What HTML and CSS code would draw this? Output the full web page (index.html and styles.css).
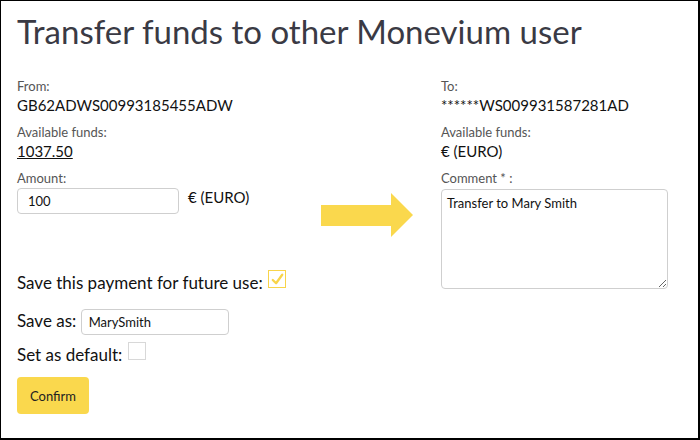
FILE: index.html
```html
<!DOCTYPE html>
<html>
<head>
<meta charset="utf-8">
<link rel="stylesheet" href="styles.css">
</head>
<body>
<div class="page">
  <h1 class="title">Transfer funds to other Monevium user</h1>
  <div class="cols">
    <div class="col-left">
      <div class="label">From:</div>
      <div class="value">GB62ADWS00993185455ADW</div>
      <div class="label">Available funds:</div>
      <div class="value"><span class="link">1037.50</span></div>
      <div class="label">Amount:</div>
      <div class="amount-row">
        <div class="input amount-input">100</div>
        <span class="currency">€ (EURO)</span>
      </div>
      <div class="opt-row save-row">Save this payment for future use: <span class="check checked"><svg viewBox="0 0 18 18" width="17" height="17"><polyline points="4,9.5 7.5,13 14,4" fill="none" stroke="#f8d44a" stroke-width="2.4" stroke-linecap="round" stroke-linejoin="round"/></svg></span></div>
      <div class="opt-row saveas-row">Save as: <span class="input saveas-input">MarySmith</span></div>
      <div class="opt-row default-row">Set as default: <span class="check"></span></div>
      <button class="btn">Confirm</button>
    </div>
    <div class="col-mid">
      <svg class="arrow" width="92" height="44" viewBox="0 0 92 44"><polygon points="0,12 70,12 70,0 92,22 70,44 70,33 0,33" fill="#fad84d"/></svg>
    </div>
    <div class="col-right">
      <div class="label">To:</div>
      <div class="value">******WS009931587281AD</div>
      <div class="label">Available funds:</div>
      <div class="value">€ (EURO)</div>
      <div class="label">Comment * :</div>
      <textarea class="comment">Transfer to Mary Smith</textarea>
    </div>
  </div>
</div>
</body>
</html>
```
FILE: styles.css
```css
html, body {
  margin: 0;
  padding: 0;
  background: #fff;
}
.page {
  width: 700px;
  height: 440px;
  box-sizing: border-box;
  border-style: solid;
  border-color: #000;
  border-width: 1px 2px 2px 1px;
  padding: 10px 0 0 16px;
  font-family: Lato, "Open Sans", sans-serif;
  color: #111;
}
.title {
  margin: 0;
  font-size: 33px;
  font-weight: 400;
  line-height: 40px;
  color: #3a3a44;
}
.cols {
  display: grid;
  grid-template-columns: 304px 120px 227px;
  margin-top: 26px;
}
.label {
  font-size: 13px;
  line-height: 18px;
  color: #555;
}
.value {
  font-size: 15px;
  line-height: 20px;
  color: #111;
  margin-bottom: 8px;
}
.link {
  text-decoration: underline;
}
.amount-row {
  display: flex;
  align-items: flex-start;
  margin-top: 1px;
}
.input {
  box-sizing: border-box;
  border: 1px solid #cfcfcf;
  border-radius: 4px;
  font-size: 13px;
  color: #111;
  display: inline-flex;
  align-items: center;
  background: #fff;
}
.amount-input {
  width: 162px;
  height: 26px;
  padding-left: 10px;
}
.currency {
  font-size: 15px;
  margin-left: 9px;
  line-height: 18px;
}
.opt-row {
  font-size: 17px;
  color: #111;
  line-height: 20px;
}
.save-row {
  margin-top: 57px;
}
.check {
  display: inline-block;
  box-sizing: border-box;
  width: 18px;
  height: 18px;
  border: 1px solid #d8d8d8;
  vertical-align: baseline;
  margin-left: 1px;
  position: relative;
  top: -1px;
}
.check.checked {
  border-color: #f8d44a;
}
.check svg {
  display: block;
}
.saveas-row {
  margin-top: 16px;
}
.saveas-input {
  width: 148px;
  height: 26px;
  padding-left: 7px;
  vertical-align: baseline;
  margin-left: 0;
}
.default-row {
  margin-top: 8px;
}
.btn {
  margin-top: 12px;
  width: 72px;
  height: 37px;
  border: none;
  border-radius: 4px;
  background: #fad84d;
  font-family: Lato, "Open Sans", sans-serif;
  font-size: 13px;
  color: #222;
  padding: 0;
}
.col-mid {
  padding-top: 116px;
}
.arrow {
  display: block;
}
.comment {
  display: block;
  box-sizing: border-box;
  width: 227px;
  height: 100px;
  margin: 2px 0 0 0;
  border: 1px solid #cfcfcf;
  border-radius: 4px;
  font-family: Lato, "Open Sans", sans-serif;
  font-size: 13px;
  color: #111;
  padding: 5px 5px;
  resize: both;
}
```
